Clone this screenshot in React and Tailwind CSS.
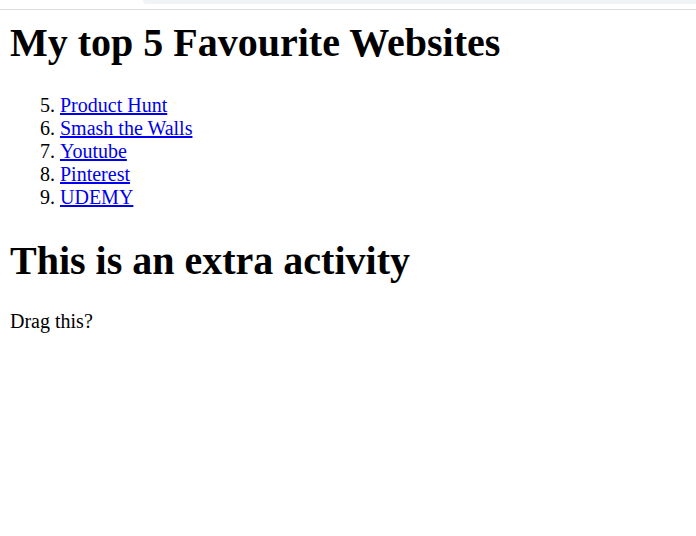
import React from "react";

const sites = [
  { name: "Product Hunt", href: "#" },
  { name: "Smash the Walls", href: "#" },
  { name: "Youtube", href: "#" },
  { name: "Pinterest", href: "#" },
  { name: "UDEMY", href: "#" },
];

export default function App() {
  return (
    <div className="min-h-[536px] bg-white text-black" style={{ fontFamily: '"Liberation Serif", "Times New Roman", serif' }}>
      {/* browser chrome strip */}
      <div className="h-[10px] border-b border-[#dadce0]">
        <div className="ml-[143px] h-[4px] rounded-bl-[10px] bg-[#f1f3f4]" />
      </div>

      <div className="px-[10px] pt-[10px]">
        <h1 className="text-[40px] font-bold leading-[46px]">My top 5 Favourite Websites</h1>
        <ol start={5} className="list-decimal pl-[50px] mt-[28px] text-[20px] leading-[23px]">
          {sites.map((s) => (
            <li key={s.name}>
              <a href={s.href} className="text-[#0000ee] underline">{s.name}</a>
            </li>
          ))}
        </ol>
        <h1 className="text-[40px] font-bold leading-[46px] mt-[29px]">This is an extra activity</h1>
        <p className="text-[20px] leading-[23px] mt-[26px]">Drag this?</p>
      </div>
    </div>
  );
}
